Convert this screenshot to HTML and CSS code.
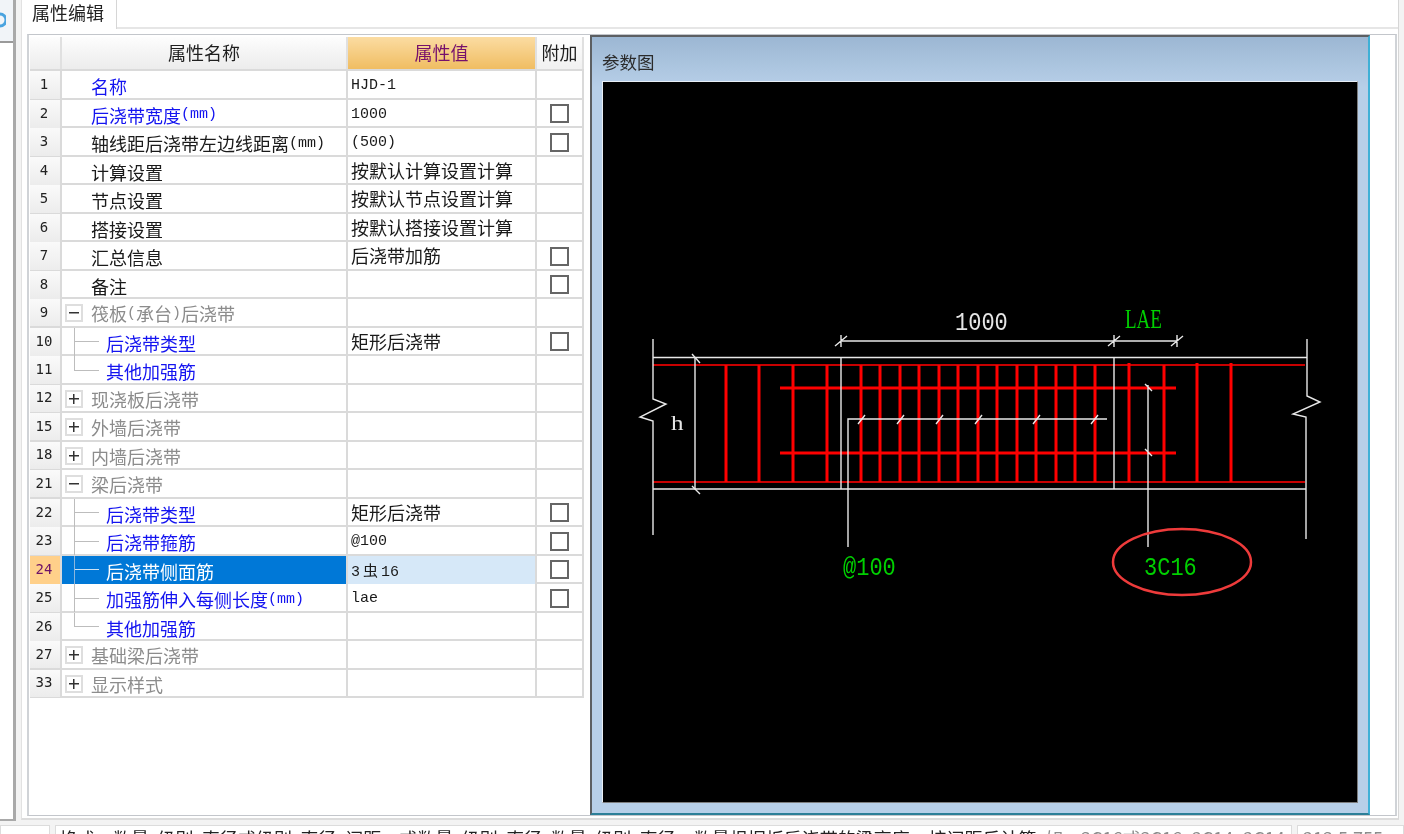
FILE: index.html
```html
<!DOCTYPE html>
<html lang="zh-CN">
<head>
<meta charset="utf-8">
<title>属性编辑</title>
<link rel="stylesheet" href="styles.css">
</head>
<body>
<div class="app">
  <div class="workspace">
    <aside class="side">
      <div class="side-head">
        <svg class="side-icon" width="6" height="16" viewBox="0 0 6 16"><path d="M0 2a6 6 0 0 1 0 12" fill="none" stroke="#4aa3df" stroke-width="3"/></svg>
      </div>
    </aside>
    <main class="main">
      <div class="tabs"><div class="tab">属性编辑</div></div>
      <div class="editor">
        <section class="grid">
          <div class="row head">
            <div class="idx"></div>
            <div class="name">属性名称</div>
            <div class="val">属性值</div>
            <div class="add">附加</div>
          </div>
          <div class="row"><div class="idx">1</div><div class="name link plain">名称</div><div class="val"><span class="lat">HJD-1</span></div><div class="add"></div></div>
          <div class="row"><div class="idx">2</div><div class="name link plain">后浇带宽度<span class="lat">(mm)</span></div><div class="val"><span class="lat">1000</span></div><div class="add"><span class="check"></span></div></div>
          <div class="row"><div class="idx">3</div><div class="name plain">轴线距后浇带左边线距离<span class="lat">(mm)</span></div><div class="val"><span class="lat">(500)</span></div><div class="add"><span class="check"></span></div></div>
          <div class="row"><div class="idx">4</div><div class="name plain">计算设置</div><div class="val">按默认计算设置计算</div><div class="add"></div></div>
          <div class="row"><div class="idx">5</div><div class="name plain">节点设置</div><div class="val">按默认节点设置计算</div><div class="add"></div></div>
          <div class="row"><div class="idx">6</div><div class="name plain">搭接设置</div><div class="val">按默认搭接设置计算</div><div class="add"></div></div>
          <div class="row"><div class="idx">7</div><div class="name plain">汇总信息</div><div class="val">后浇带加筋</div><div class="add"><span class="check"></span></div></div>
          <div class="row"><div class="idx">8</div><div class="name plain">备注</div><div class="val"></div><div class="add"><span class="check"></span></div></div>
          <div class="row"><div class="idx">9</div><div class="name group"><span class="box minus"></span>筏板<span class="lat">(</span>承台<span class="lat">)</span>后浇带</div><div class="val"></div><div class="add"></div></div>
          <div class="row"><div class="idx">10</div><div class="name link child tee">后浇带类型</div><div class="val">矩形后浇带</div><div class="add"><span class="check"></span></div></div>
          <div class="row"><div class="idx">11</div><div class="name link child elbow">其他加强筋</div><div class="val"></div><div class="add"></div></div>
          <div class="row"><div class="idx">12</div><div class="name group"><span class="box plus"></span>现浇板后浇带</div><div class="val"></div><div class="add"></div></div>
          <div class="row"><div class="idx">15</div><div class="name group"><span class="box plus"></span>外墙后浇带</div><div class="val"></div><div class="add"></div></div>
          <div class="row"><div class="idx">18</div><div class="name group"><span class="box plus"></span>内墙后浇带</div><div class="val"></div><div class="add"></div></div>
          <div class="row"><div class="idx">21</div><div class="name group"><span class="box minus"></span>梁后浇带</div><div class="val"></div><div class="add"></div></div>
          <div class="row"><div class="idx">22</div><div class="name link child tee">后浇带类型</div><div class="val">矩形后浇带</div><div class="add"><span class="check"></span></div></div>
          <div class="row"><div class="idx">23</div><div class="name link child tee">后浇带箍筋</div><div class="val"><span class="lat">@100</span></div><div class="add"><span class="check"></span></div></div>
          <div class="row selected"><div class="idx">24</div><div class="name child tee">后浇带侧面筋</div><div class="val"><span class="lat">3<span class="steel">虫</span>16</span></div><div class="add"><span class="check"></span></div></div>
          <div class="row"><div class="idx">25</div><div class="name link child tee">加强筋伸入每侧长度<span class="lat">(mm)</span></div><div class="val"><span class="lat">lae</span></div><div class="add"><span class="check"></span></div></div>
          <div class="row"><div class="idx">26</div><div class="name link child elbow">其他加强筋</div><div class="val"></div><div class="add"></div></div>
          <div class="row"><div class="idx">27</div><div class="name group"><span class="box plus"></span>基础梁后浇带</div><div class="val"></div><div class="add"></div></div>
          <div class="row"><div class="idx">33</div><div class="name group"><span class="box plus"></span>显示样式</div><div class="val"></div><div class="add"></div></div>
        </section>
        <section class="panel">
          <div class="panel-title">参数图</div>
          <div class="canvas">
            <svg class="drawing" viewBox="603 82 755 721" width="755" height="721">
              <g class="rebar-long">
                <path d="M653 365H1305M653 482H1305"/>
              </g>
              <g class="rebar">
                <path d="M726 365V482M759 365V482M793 365V482M827 365V482M861 365V482M880 365V482M900 365V482M919 365V482M939 365V482M958 365V482M978 365V482M997 365V482M1017 365V482M1036 365V482M1056 365V482M1075 365V482M1095 365V482M1129 363V482M1164 365V482M1197 363V482M1231 363V482"/>
                <path d="M780 388H1176M780 453H1176"/>
              </g>
              <g class="cad">
                <path d="M653 339V399L666 404L640 417L653 421V535"/>
                <path d="M1307 339V396L1320 402L1293 414L1306 417V539"/>
                <path d="M653 357.5H1307M653 489H1306"/>
                <path d="M841 357V489M1114 357V489M695 357V489"/>
                <path d="M841 341H1177"/>
                <path d="M841 335V347M835 346L847 336M1114 335V347M1108 346L1120 336M1177 335V347M1171 346L1183 336"/>
                <path d="M692 354L700 363M692 486L700 494"/>
                <path d="M848 547V419H1107"/>
                <path d="M858 424L865 415M897 424L904 415M936 424L943 415M975 424L982 415M1033 424L1040 415M1091 424L1098 415"/>
                <path d="M1148 547V385M1145 384L1152 391M1145 449L1152 456"/>
              </g>
              <ellipse class="mark" cx="1182" cy="562" rx="69" ry="33"/>
              <text class="label white" transform="translate(955 330) scale(1 1.2)">1000</text>
              <text class="serif green" transform="translate(1125 328) scale(0.95 1.35)">LAE</text>
              <text class="serif white" transform="translate(671 430) scale(1.25 1)">h</text>
              <text class="label green" transform="translate(843 575) scale(1 1.2)">@100</text>
              <text class="label green" transform="translate(1144 575) scale(1 1.2)">3C16</text>
            </svg>
          </div>
        </section>
      </div>
    </main>
  </div>
  <footer class="status">
    <div class="cell first"></div>
    <div class="cell msg">格式：数量 级别 直径或级别 直径 间距，或数量 级别 直径 数量 级别 直径，数量根据板后浇带的梁高度 a按间距反计算 <span class="faint">如：3C16或3C16+2C14+2C14</span></div>
    <div class="cell last faint">213.5.755</div>
  </footer>
</div>
</body>
</html>
```
FILE: styles.css
```css
* { box-sizing: border-box; }
html, body { margin: 0; padding: 0; }
body {
  width: 1404px;
  height: 834px;
  overflow: hidden;
  background: #f3f3f3;
  font-family: "Noto Sans CJK SC", sans-serif;
  font-size: 18px;
  color: #1a1a1a;
}
.app {
  display: flex;
  flex-direction: column;
  height: 834px;
  filter: blur(0.35px);
}
.workspace { display: flex; height: 825px; }

.side {
  width: 16px;
  height: 821px;
  background: #fff;
  border-right: 3px solid #a9a9a9;
  border-bottom: 2px solid #a9a9a9;
}
.side-head {
  height: 43px;
  background: #f1f4f8;
  border-bottom: 2px solid #9a9a9a;
  padding-top: 12px;
}
.side-icon { display: block; }

.main {
  width: 1378px;
  height: 820px;
  margin-left: 5px;
  background: #fff;
  border-right: 1px solid #d6d6d6;
  border-bottom: 2px solid #dcdcdc;
  border-left: 1px solid #e2e2e2;
  display: flex;
  flex-direction: column;
}
.tabs { height: 29px; border-bottom: 2px solid #e6e6e6; display: flex; }
.tab {
  width: 95px;
  height: 29px;
  padding-left: 10px;
  line-height: 24px;
  background: #fff;
  border-right: 1px solid #d6d6d6;
  color: #222;
}
.editor {
  display: flex;
  gap: 6px;
  height: 782px;
  margin: 5px 0 0 5px;
  width: 1370px;
  background: #fff;
  border-style: solid;
  border-width: 1px 2px;
  border-color: #c3c6cb #d0d3d7;
}

.grid { width: 554px; margin: 2px 0 0 1px; flex: none; }
.row {
  display: grid;
  grid-template-columns: 32px 286px 189px 47px;
  height: 28.5px;
  border-bottom: 2px solid #dadada;
}
.row > div { border-right: 2px solid #dadada; display: flex; align-items: center; min-width: 0; }
.idx {
  justify-content: center;
  font-family: "DejaVu Sans Mono", monospace;
  font-size: 14px;
  padding: 0 2px 2px 0;
  background: linear-gradient(#fafafa, #ececec);
  color: #222;
}
.name { white-space: nowrap; padding-top: 2px; }
.name .lat { vertical-align: -1px; }
.plain { padding-left: 29px; }
.val { padding: 0 0 2px 3px; white-space: nowrap; }
.val .lat { display: block; padding-top: 3px; }
.add { justify-content: center; }
.lat { font-family: "Liberation Mono", monospace; font-size: 15px; }
.steel { margin: 0 3px; }
.link { color: #1414f0; }

.group { padding: 1px 0 0 3px; color: #8c8c8c; }
.box {
  width: 18px;
  height: 18px;
  flex: none;
  margin-right: 8px;
  border: 2px solid #dedede;
  background-repeat: no-repeat;
  background-position: center;
}
.minus { background-image: linear-gradient(#333, #333); background-size: 10px 1.5px; }
.plus {
  background-image: linear-gradient(#333, #333), linear-gradient(#333, #333);
  background-size: 10px 1.5px, 1.5px 10px;
}
.child { padding-left: 44px; }
.tee {
  background-image: linear-gradient(#bdbdbd, #bdbdbd), linear-gradient(#bdbdbd, #bdbdbd);
  background-position: 12px 0, 12px 50%;
  background-size: 1px 100%, 25px 1px;
  background-repeat: no-repeat;
}
.elbow {
  background-image: linear-gradient(#bdbdbd, #bdbdbd), linear-gradient(#bdbdbd, #bdbdbd);
  background-position: 12px 0, 12px 50%;
  background-size: 1px 50%, 25px 1px;
  background-repeat: no-repeat;
}
.check {
  width: 19px;
  height: 19px;
  border: 2px solid #666;
  background: #fff;
}

.head { height: 34px; }
.head > div {
  justify-content: center;
  padding: 0 0 3px;
  background: linear-gradient(#fdfdfd, #ececec);
  color: #1f1f1f;
  border-right-color: #e0e0e0;
}
.head .val {
  background: linear-gradient(#fbdca2, #f0bd62);
  color: #76106c;
}
.head .add { background: linear-gradient(#fdfdfd, #f1f1f1); }

.selected .idx { background: #ffd08a; color: #6d1268; }
.selected .name {
  background-color: #0078d7;
  color: #fff;
  background-image: linear-gradient(#8bb6dc, #8bb6dc), linear-gradient(#cfe2f3, #cfe2f3);
}
.selected .val { background: #d6e8f8; }

.panel {
  width: 780px;
  height: 780px;
  flex: none;
  background: linear-gradient(#9cb7d3, #b7cfe8 50px);
  border-top: 2px solid #5c5f62;
  border-left: 2px solid #5c5f62;
  border-right: 2px solid #3fb0d6;
  border-bottom: 2px solid #2c7f98;
  padding-left: 10px;
  display: flex;
  flex-direction: column;
}
.panel-title { height: 44px; padding-top: 14px; line-height: 22px; font-size: 17.5px; color: #2b2b2b; }
.canvas {
  width: 756px;
  height: 722px;
  overflow: hidden;
  background: #000;
  border: 1px solid #7d7d7d;
  border-top-color: #e8eef5;
  border-left-color: #e8eef5;
}
.drawing { display: block; }
.cad path { fill: none; stroke: #e8e8e8; stroke-width: 1.4; }
.rebar path { fill: none; stroke: #ff0000; stroke-width: 3; }
.rebar-long path { fill: none; stroke: #c80000; stroke-width: 2; }
.mark { fill: none; stroke: #ee3b3b; stroke-width: 2.5; }
.label { font-family: "Liberation Mono", monospace; font-size: 22px; }
.serif { font-family: "Liberation Serif", serif; font-size: 20px; }
.white { fill: #e6e6e6; }
.green { fill: #00d000; }

.status { display: flex; gap: 5px; height: 9px; overflow: hidden; }
.cell {
  height: 20px;
  background: #fff;
  border-top: 1px solid #dcdcdc;
  border-left: 1px solid #dcdcdc;
  border-right: 1px solid #dcdcdc;
  white-space: nowrap;
  overflow: hidden;
  line-height: 22px;
  padding-top: 1px;
  color: #222;
}
.first { width: 50px; }
.msg { width: 1237px; padding-left: 3px; word-spacing: 4.5px; }
.last { width: 107px; padding-left: 5px; }
.faint { color: #8c8c8c; }
```
